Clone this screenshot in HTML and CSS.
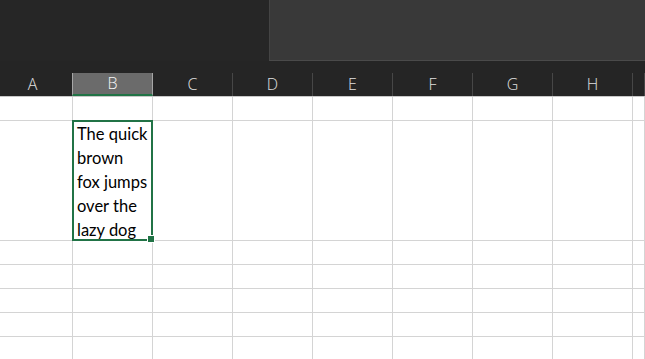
FILE: index.html
```html
<!DOCTYPE html>
<html>
<head>
  <title>Sheet</title>
  <link rel="stylesheet" href="styles.css">
</head>
<body>
  <div class="topbar">
    <div class="topbar-left"></div>
    <div class="panel"></div>
  </div>
  <div class="spacer"></div>

  <div class="headers">
    <div class="hcell">A</div>
    <div class="hcell active">B</div>
    <div class="hcell">C</div>
    <div class="hcell">D</div>
    <div class="hcell">E</div>
    <div class="hcell">F</div>
    <div class="hcell">G</div>
    <div class="hcell">H</div>
    <div class="hcell"></div>
  </div>

  <div class="sheet">
    <!-- row 1 -->
    <div class="cell"></div><div class="cell"></div><div class="cell"></div><div class="cell"></div><div class="cell"></div><div class="cell"></div><div class="cell"></div><div class="cell"></div><div class="cell"></div>
    <!-- row 2 (wrapped text) -->
    <div class="cell tall"></div>
    <div class="cell tall selected">The quick<br>brown<br>fox jumps<br>over the<br>lazy dog</div>
    <div class="cell tall"></div><div class="cell tall"></div><div class="cell tall"></div><div class="cell tall"></div><div class="cell tall"></div><div class="cell tall"></div><div class="cell tall"></div>
    <!-- rows 3-7 -->
    <div class="cell"></div><div class="cell"></div><div class="cell"></div><div class="cell"></div><div class="cell"></div><div class="cell"></div><div class="cell"></div><div class="cell"></div><div class="cell"></div>
    <div class="cell"></div><div class="cell"></div><div class="cell"></div><div class="cell"></div><div class="cell"></div><div class="cell"></div><div class="cell"></div><div class="cell"></div><div class="cell"></div>
    <div class="cell"></div><div class="cell"></div><div class="cell"></div><div class="cell"></div><div class="cell"></div><div class="cell"></div><div class="cell"></div><div class="cell"></div><div class="cell"></div>
    <div class="cell"></div><div class="cell"></div><div class="cell"></div><div class="cell"></div><div class="cell"></div><div class="cell"></div><div class="cell"></div><div class="cell"></div><div class="cell"></div>
    <div class="cell"></div><div class="cell"></div><div class="cell"></div><div class="cell"></div><div class="cell"></div><div class="cell"></div><div class="cell"></div><div class="cell"></div><div class="cell"></div>
  </div>
</body>
</html>
```

FILE: styles.css
```css
* {
  box-sizing: border-box;
}
html, body {
  margin: 0;
  height: 100%;
  overflow: hidden;
}
body {
  background-color: #ffffff;
  font-family: "Open Sans", sans-serif;
}
.topbar {
  display: flex;
  height: 61px;
  background-color: #262626;
}
.topbar-left {
  width: 269px;
}
.panel {
  flex: 1;
  background-color: #393939;
  border-left: 1px solid #444;
  border-bottom: 1px solid #4a4a4a;
}
.spacer {
  height: 12px;
  background-color: #252525;
}
/* sheet is scrolled a few px, so column A is cut on the left */
.headers, .sheet {
  display: grid;
  grid-template-columns: repeat(8, 80px) 1fr;
  margin-left: -7px;
}
.headers {
  height: 24px;
  background-color: #252525;
  border-bottom: 1px solid #c8c8c8;
}
.hcell {
  border-right: 1px solid #474747;
  color: #e0e0e0;
  font-size: 16px;
  font-weight: 300;
  line-height: 23px;
  text-align: center;
}
.hcell.active {
  background-color: #6b6b6b;
  color: #f6f6f6;
  margin-left: -1px;
  border-left: 1px solid #a6a6a6;
  border-right: 1px solid #a6a6a6;
  border-bottom: 2px solid #217346;
  line-height: 21px;
}
.sheet {
  grid-auto-rows: 24px;
}
.cell {
  border-right: 1px solid #d4d4d4;
  border-bottom: 1px solid #d4d4d4;
}
.cell.tall {
  grid-row: span 5;
}
.selected {
  position: relative;
  margin: -1px 0 0 -1px;
  border: 2px solid #217346;
  padding: 0 1px 0 3px;
  font-family: "Lato", sans-serif;
  font-size: 16.5px;
  line-height: 24px;
  white-space: nowrap;
  color: #000;
}
.selected::after {
  content: "";
  position: absolute;
  right: -4px;
  bottom: -4px;
  width: 6px;
  height: 6px;
  background-color: #217346;
  border: 1px solid #fff;
}
```
